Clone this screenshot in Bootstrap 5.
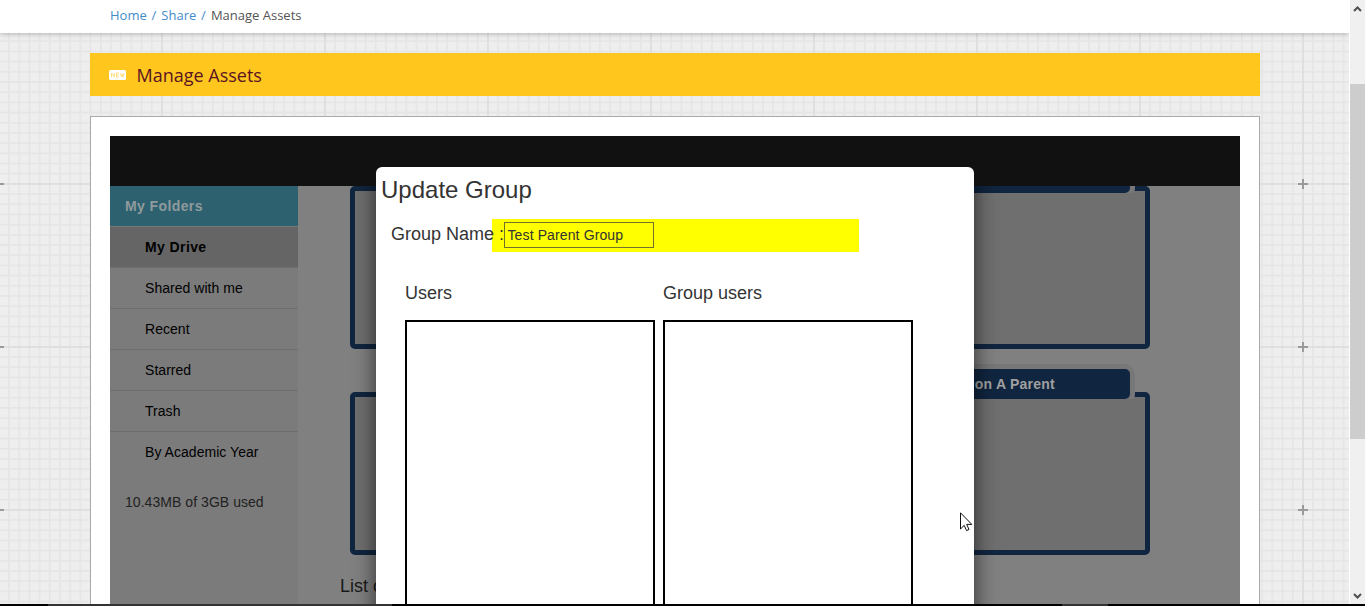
<!DOCTYPE html>
<html lang="en">
<head>
<meta charset="utf-8">
<meta name="viewport" content="width=device-width, initial-scale=1">
<title>Manage Assets</title>
<link href="https://cdn.jsdelivr.net/npm/bootstrap@5.3.0/dist/css/bootstrap.min.css" rel="stylesheet">
<style>
body{font-family:"Liberation Sans",Arial,sans-serif;font-size:14px;line-height:20px;color:#333;height:606px;overflow:hidden}
.viewport{height:604px}
/* graph paper: 163px tile, 16 cells, a cross at each tile corner */
.page{width:1349px;background:#eee url("data:image/svg+xml,%3Csvg xmlns='http://www.w3.org/2000/svg' width='163' height='163'%3E%3Cdefs%3E%3Cpattern id='g' x='81' y='81' width='10.1875' height='10.1875' patternUnits='userSpaceOnUse'%3E%3Cpath d='M0 .8H11M.8 0V11' stroke='%23e5e5e5' stroke-width='1.6'/%3E%3C/pattern%3E%3C/defs%3E%3Cpath fill='url(%23g)' d='M0 0h163v163H0z'/%3E%3Cpath d='M0 82H163M82 0V163' stroke='%23dddddd' stroke-width='1.6'/%3E%3Cpath d='M77 82H87M82 77V87' stroke='%239a9a9a' stroke-width='2'/%3E%3C/svg%3E") -83px -61px}
.topbar{height:33px;background:#fff;box-shadow:0 1px 5px rgba(0,0,0,.25);padding:5px 0 0 110px;font:13px/20px "Open Sans",sans-serif;color:#555;gap:4.8px}
.topbar a,.topbar .sep{color:#428bca;text-decoration:none}
.topbar .sep{width:5px}
.frame{width:1170px;margin-left:90px}
.titlebar{height:43px;margin-top:20px;background:#ffc61e;color:#5a1423;font:18px/43px "Open Sans",sans-serif;padding:1px 0 0 19px}
.titlebar svg{margin:16px 10.5px 0 0}
.panel{margin-top:20px;background:#fff;border:1px solid #aaa;border-bottom:0;padding:19px 19px 0;height:488px}
.blackbar{height:50px;background:#111}
.work{height:418px;background:#808080}
.side{width:188px;background:#7b7b7b;color:#000}
.side-head{height:41px;background:#2d6170;border-bottom:1px solid #777;color:#8f9a9d;font-weight:700;letter-spacing:.4px;padding:10px 15px}
.side a{display:block;height:41px;padding:10px 35px;color:#000;text-decoration:none;border-bottom:1px solid #6e6e6e;letter-spacing:.04px}
.side a.chosen{background:#656565;font-weight:700;letter-spacing:.4px}
.side a:last-of-type{border:0}
.used{color:#222;padding:19px 15px;letter-spacing:.05px}
.boards{padding-left:52px}
.board{width:800px;height:163px;border:5px solid #10253f;border-radius:5px;background:#6f6f6f}
.board + .board{margin-top:43px}
.board-tab{width:740px;height:30px;margin:-28px 15px 0 auto;background:#10253f;border-radius:5px;box-shadow:0 0 0 5px #777;clip-path:inset(-5px -5px 0 -5px round 10px 10px 0 0);color:#a0a0a0;font-weight:700;letter-spacing:.25px;text-align:right;line-height:30px;padding-right:75px}
.list-title{font-size:18px;line-height:26px;margin:18px 0 0 -10px;color:#1a1a1a}
.dialog{left:376px;top:167px;width:598px;height:437px;background:#fff;border-radius:6px 6px 0 0;padding:10px 5px 0}
.dialog-shade{left:326px;top:186px;width:698px;height:418px;overflow:hidden}
.dialog-shade div{margin:-19px 50px 0;height:520px;box-shadow:0 3px 22px rgba(0,0,0,.65);border-radius:6px}
.dialog h3{font-size:24px;line-height:26px;margin:0;font-weight:400}
.field{font-size:18px;line-height:30px;height:33px;margin:16px 0 0 10px}
.field-name{width:103px}
.field-fill{background:#ff0;width:367px;margin-left:-2px;padding:3px 0 0 12px}
.field-fill input{width:150px;height:26px;border:1px solid #72722a;background:#ff0;padding:0 2.5px;font-size:14px;letter-spacing:.12px;color:#333;border-radius:0}
.picks{margin:28px 0 0 24px}
.pick{width:250px;font-size:18px;line-height:26px}
.pick .slot{height:290px;border:2px solid #000;border-bottom:0;margin-top:14px}
.scroller{width:15px;background:#f0f0f0;margin-left:1px}
.thumb{height:355px;background:#cdcdcd}
.edge{height:2px;background:#000}
.edge i{height:2px;background:#333}
.pointer{left:960px;top:512px}
</style>
<script src="https://cdn.jsdelivr.net/npm/bootstrap@5.3.0/dist/js/bootstrap.bundle.min.js"></script>
</head>
<body>
<div class="viewport d-flex overflow-hidden bg-white">
  <div class="page overflow-hidden flex-shrink-0">
    <nav class="topbar d-flex"><a href="#">Home</a><span class="sep">/</span><a href="#">Share</a><span class="sep">/</span><span>Manage Assets</span></nav>
    <div class="frame">
      <div class="titlebar d-flex">
        <svg width="17" height="10" viewBox="0 0 17 10"><rect width="17" height="10" rx="1.5" fill="#fff"/><path d="M2.5 7V3L5.5 7V3M10 3H7.5V7H10M7.5 5H9.5M11.5 3L12.5 7L13.3 4L14.1 7L15 3" fill="none" stroke="#ffda70" stroke-width=".9"/></svg>
        <span>Manage Assets</span>
      </div>
      <main class="panel">
        <div class="blackbar"></div>
        <div class="work d-flex overflow-hidden">
          <aside class="side flex-shrink-0">
            <div class="side-head">My Folders</div>
            <a href="#" class="chosen">My Drive</a>
            <a href="#">Shared with me</a>
            <a href="#">Recent</a>
            <a href="#">Starred</a>
            <a href="#">Trash</a>
            <a href="#">By Academic Year</a>
            <div class="used">10.43MB of 3GB used</div>
          </aside>
          <section class="boards">
            <div class="board"><div class="board-tab"></div></div>
            <div class="board"><div class="board-tab">on A Parent</div></div>
            <div class="list-title">List of</div>
          </section>
        </div>
      </main>
    </div>
  </div>
  <div class="scroller d-flex flex-column align-items-center flex-shrink-0">
    <svg width="15" height="84" viewBox="0 0 15 84"><path d="M4 11L7.5 7.5L11 11" fill="none" stroke="#505050" stroke-width="2"/></svg>
    <div class="thumb w-100"></div>
    <svg class="mt-auto" width="15" height="17" viewBox="0 0 15 17"><path d="M4 7L7.5 10.5L11 7" fill="none" stroke="#505050" stroke-width="2"/></svg>
  </div>
</div>
<div class="edge d-flex"><i style="width:344px;margin-left:48px"></i><i style="width:46px;margin-left:670px"></i></div>

<div class="dialog-shade position-absolute"><div></div></div>
<div class="dialog position-absolute overflow-hidden">
  <h3>Update Group</h3>
  <div class="field d-flex"><span class="field-name text-nowrap position-relative z-1">Group Name :</span><div class="field-fill d-flex align-items-start"><input value="Test Parent Group" aria-label="Group name"></div></div>
  <div class="picks d-flex gap-2">
    <div class="pick">Users<div class="slot"></div></div>
    <div class="pick">Group users<div class="slot"></div></div>
  </div>
</div>
<svg class="pointer position-absolute" width="13" height="20" viewBox="0 0 13 20"><path d="M.5 .8V17L4.2 13.4L6.6 18.6L9 17.5L6.7 12.4H11.8Z" fill="#fff" stroke="#111" stroke-width="1"/></svg>
</body>
</html>
